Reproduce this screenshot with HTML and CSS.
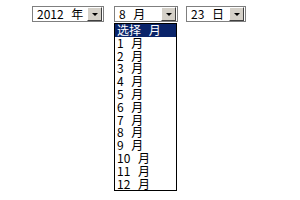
FILE: index.html
```html
<!DOCTYPE html>
<html lang="zh-CN">
<head>
    <meta charset="UTF-8">
    <title>日期选择</title>
    <link rel="stylesheet" href="styles.css">
</head>
<body>
    <div class="date-row">
        <div class="field field-year">
            <div class="combo">
                <span class="combo-text">2012 年</span>
                <span class="combo-btn"><span class="arrow"></span></span>
            </div>
        </div>
        <div class="field field-month">
            <div class="combo">
                <span class="combo-text">8 月</span>
                <span class="combo-btn"><span class="arrow"></span></span>
            </div>
            <ul class="combo-list">
                <li class="selected">选择 月</li>
                <li>1 月</li>
                <li>2 月</li>
                <li>3 月</li>
                <li>4 月</li>
                <li>5 月</li>
                <li>6 月</li>
                <li>7 月</li>
                <li>8 月</li>
                <li>9 月</li>
                <li>10 月</li>
                <li>11 月</li>
                <li>12 月</li>
            </ul>
        </div>
        <div class="field field-day">
            <div class="combo">
                <span class="combo-text">23 日</span>
                <span class="combo-btn"><span class="arrow"></span></span>
            </div>
        </div>
    </div>
</body>
</html>
```

FILE: styles.css
```css
body {
    margin: 0;
    background-color: white;
    font-family: "Noto Sans CJK SC", "DejaVu Sans", sans-serif;
    font-size: 12px;
    color: black;
}
.date-row {
    display: flex;
    align-items: flex-start;
    padding: 6px 0 0 32px;
}
.field {
    display: flex;
    flex-direction: column;
}
.field-year {
    width: 72px;
    margin-right: 10px;
}
.field-month {
    width: 64px;
    margin-right: 8px;
}
.field-day {
    width: 60px;
}
.combo {
    display: flex;
    height: 14px;
    border: 1px solid #7f7f7f;
    background-color: white;
}
.combo-text {
    flex: 1;
    padding-left: 4px;
    line-height: 14px;
    word-spacing: 5px;
    white-space: nowrap;
}
.combo-btn {
    width: 13px;
    margin-right: 1px;
    background-color: #d4d0c8;
    border-top: 1px solid #ffffff;
    border-left: 1px solid #ffffff;
    border-right: 1px solid #404040;
    border-bottom: 1px solid #404040;
    display: flex;
    justify-content: center;
    align-items: center;
}
.arrow {
    width: 0;
    height: 0;
    border-left: 3px solid transparent;
    border-right: 3px solid transparent;
    border-top: 3px solid black;
}
.combo-list {
    width: 61px;
    margin: 1px 0 0 0;
    padding: 0;
    list-style-type: none;
    border: 1px solid black;
    background-color: white;
}
.combo-list li {
    height: 12.8px;
    line-height: 12.8px;
    padding-left: 2px;
    word-spacing: 5px;
    white-space: nowrap;
}
.combo-list .selected {
    background-color: #0a246a;
    color: white;
}
```
